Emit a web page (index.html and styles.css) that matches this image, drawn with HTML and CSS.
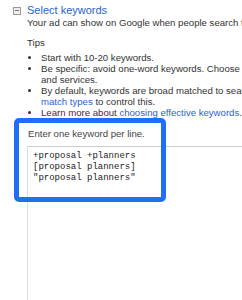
FILE: index.html
```html
<!DOCTYPE html>
<html lang="en">
<head>
    <meta charset="UTF-8">
    <meta name="viewport" content="width=device-width, initial-scale=1.0">
    <title>Select keywords</title>
    <link rel="stylesheet" href="styles.css">
</head>
<body>
    <div class="panel">
        <div class="panel-header">
            <span class="collapse-icon"></span>
            <a href="#" class="panel-title">Select keywords</a>
        </div>

        <div class="panel-body">
            <p class="intro">Your ad can show on Google when people search for things related to your keywords.</p>

            <h4 class="tips-title">Tips</h4>
            <ul class="tips">
                <li>Start with 10-20 keywords.</li>
                <li>Be specific: avoid one-word keywords. Choose phrases that relate to your products<br>and services.</li>
                <li>By default, keywords are broad matched to searches. Use<br><a href="#">match types</a> to control this.</li>
                <li>Learn more about <a href="#">choosing effective keywords</a>.</li>
            </ul>

            <div class="keyword-field">
                <label class="field-label" for="keywords">Enter one keyword per line.</label>
                <div class="keyword-box" id="keywords">
<pre>+proposal +planners
[proposal planners]
"proposal planners"</pre>
                </div>
            </div>
        </div>

        <!-- highlight drawn over the keyword field -->
        <div class="highlight"></div>
    </div>
</body>
</html>
```

FILE: styles.css
```css
html, body {
    overflow: hidden;
}
body {
    margin: 0;
    font-family: 'Liberation Sans', Arial, Helvetica, sans-serif;
    font-size: 9.6px;
    line-height: 11px;
    color: #333;
    background-color: white;
}
a {
    color: #2a5fcf;
    text-decoration: none;
}
.panel {
    position: relative;
    width: 520px;
    height: 300px;
    padding: 5px 0 0 13px;
}
.panel-header {
    display: flex;
    align-items: center;
    gap: 6px;
}
.collapse-icon {
    position: relative;
    width: 6px;
    height: 6px;
    border: 1px solid #999;
    background-color: #eee;
}
.collapse-icon::after {
    content: "";
    position: absolute;
    left: 1px;
    right: 1px;
    top: 2.5px;
    height: 1px;
    background-color: #777;
}
.panel-title {
    font-size: 11px;
}
.panel-body {
    padding-left: 14px;
}
.intro {
    margin: 1px 0 0;
    white-space: nowrap;
}
.tips-title {
    margin: 9px 0 0;
    font-weight: normal;
}
.tips {
    margin: 4px 0 0;
    padding-left: 14px;
    white-space: nowrap;
}
.tips li {
    margin: 0;
}
.keyword-field {
    margin-top: 10px;
}
.field-label {
    display: block;
    padding-left: 1px;
    color: #444;
}
.keyword-box {
    margin-top: 7px;
    height: 200px;
    border-top: 1px solid #ccc;
    border-left: 1px solid #ddd;
    padding: 4px 5px;
}
.keyword-box pre {
    margin: 0;
    font-family: 'Liberation Mono', 'Courier New', monospace;
    font-size: 9px;
    line-height: 11px;
    color: #222;
}
.highlight {
    position: absolute;
    left: 14px;
    top: 118px;
    width: 142px;
    height: 74px;
    border: 5px solid #1f6ff5;
    border-radius: 5px;
}
```
